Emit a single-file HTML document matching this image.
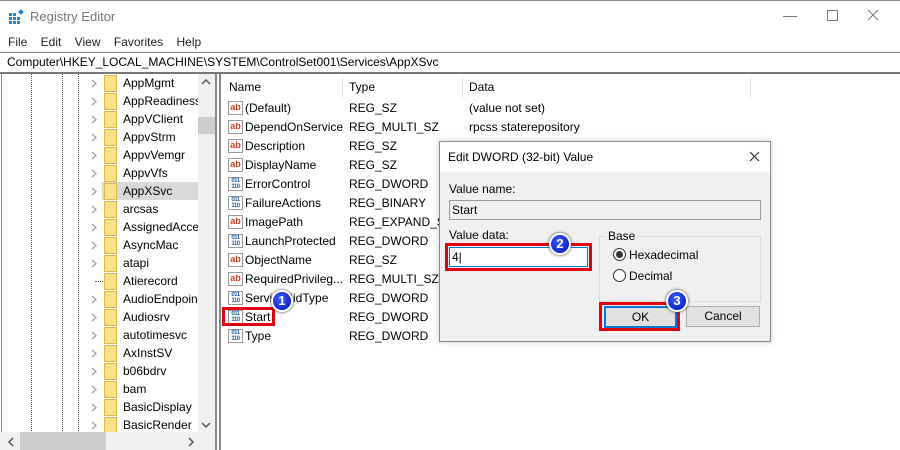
<!DOCTYPE html><html><head><style>
body{margin:0;width:900px;height:450px;overflow:hidden;background:#fff;font-family:"Liberation Sans",sans-serif;font-size:12px;color:#000;position:relative}
.a{position:absolute;white-space:nowrap}
.dot{position:absolute;width:0;border-left:1px dotted #555;top:74px;height:357px}
.fold{position:absolute;left:104px;width:11px;height:15px;background:#fbe08a;border:1px solid #e0b94a}
.chev{position:absolute;left:91px;color:#aaa;font-size:12px}
.ab{position:absolute;left:228px;width:13px;height:12px;border:1px solid #999;background:#fff;color:#d03d1a;font-weight:bold;font-size:9px;line-height:11px;text-align:center}
.bi{position:absolute;left:228px;width:13px;height:12px;border:1px solid #999;background:#fff;color:#2a5ea8;font-weight:bold;font-size:6px;line-height:6px;text-align:center;letter-spacing:-0.5px}
.badge{position:absolute;width:18px;height:18px;border-radius:50%;background:radial-gradient(circle at 40% 35%,#3b5cff,#0010b0);border:2px solid #fff;box-shadow:0 0 3px #333;color:#fff;font-weight:bold;font-size:13px;text-align:center;line-height:18px}
#tree{position:absolute;left:0;top:0;width:198px;height:432px;overflow:hidden}
</style></head><body>
<div class="a" style="left:0;top:0;width:900px;height:1px;background:#888"></div>
<svg class="a" style="left:9px;top:9px" width="16" height="16"><g fill="#1e88d8"><rect x="0" y="4" width="3" height="3"/><rect x="4" y="4" width="3" height="3"/><rect x="0" y="8" width="3" height="3"/><rect x="4" y="8" width="3" height="3"/><rect x="8" y="8" width="3" height="3"/><rect x="0" y="12" width="3" height="3"/><rect x="4" y="12" width="3" height="3"/><rect x="8" y="12" width="3" height="3"/><rect x="10" y="1" width="4" height="4" transform="rotate(45 12 3)"/></g></svg>
<div class="a" style="left:30px;top:9px;font-size:13px;color:#777">Registry Editor</div>
<div class="a" style="left:783px;top:16px;width:14px;height:1px;background:#777"></div>
<div class="a" style="left:827px;top:10px;width:9px;height:9px;border:1px solid #777"></div>
<svg class="a" style="left:867px;top:9px" width="12" height="12"><path d="M1 1L11 11M11 1L1 11" stroke="#777" stroke-width="1"/></svg>
<div class="a" style="left:8px;top:35px;font-size:12px;color:#222">File&nbsp;&nbsp;&nbsp; Edit&nbsp;&nbsp;&nbsp; View&nbsp;&nbsp;&nbsp; Favorites&nbsp;&nbsp;&nbsp; Help</div>
<div class="a" style="left:0;top:50px;width:900px;height:1px;background:#eee"></div>
<div class="a" style="left:0;top:52px;width:900px;height:1px;background:#777"></div>
<div class="a" style="left:7px;top:55px;font-size:12px">Computer\HKEY_LOCAL_MACHINE\SYSTEM\ControlSet001\Services\AppXSvc</div>
<div class="a" style="left:0;top:72px;width:900px;height:2px;background:#777"></div>
<div class="a" style="left:1px;top:74px;width:1px;height:376px;background:#888"></div>
<div class="dot" style="left:31px"></div><div class="dot" style="left:62px"></div><div class="dot" style="left:78px"></div>
<div id="tree"></div>
<div class="a" style="left:198px;top:74px;width:17px;height:358px;background:#f0f0f0"></div>
<div class="a" style="left:198px;top:117px;width:17px;height:17px;background:#cdcdcd"></div>
<svg class="a" style="left:201px;top:78px" width="10" height="8"><path d="M1 6L5 2L9 6" stroke="#555" fill="none" stroke-width="1.5"/></svg>
<svg class="a" style="left:201px;top:421px" width="10" height="8"><path d="M1 2L5 6L9 2" stroke="#555" fill="none" stroke-width="1.5"/></svg>
<div class="a" style="left:0;top:432px;width:215px;height:18px;background:#f0f0f0"></div>
<div class="a" style="left:20px;top:432px;width:86px;height:18px;background:#cdcdcd"></div>
<svg class="a" style="left:7px;top:437px" width="8" height="10"><path d="M6 1L2 5L6 9" stroke="#555" fill="none" stroke-width="1.5"/></svg>
<svg class="a" style="left:187px;top:437px" width="8" height="10"><path d="M2 1L6 5L2 9" stroke="#555" fill="none" stroke-width="1.5"/></svg>
<div class="a" style="left:215px;top:74px;width:2px;height:376px;background:#888"></div>
<div class="a" style="left:219px;top:74px;width:2px;height:376px;background:#888"></div>
<div class="a" style="left:342px;top:76px;width:1px;height:22px;background:#e5e5e5"></div>
<div class="a" style="left:462px;top:76px;width:1px;height:22px;background:#e5e5e5"></div>
<div class="a" style="left:750px;top:76px;width:1px;height:22px;background:#e5e5e5"></div>
<div class="a" style="left:229px;top:80px">Name</div><div class="a" style="left:349px;top:80px">Type</div><div class="a" style="left:469px;top:80px">Data</div>
<div id="list"></div>
<div class="a" style="left:222px;top:307px;width:53px;height:19px;border:3px solid #e5000f;box-sizing:border-box"></div>
<div class="badge" style="left:271px;top:290px">1</div>
<div class="a" style="left:439px;top:141px;width:330px;height:199px;border:1px solid #888;background:#f0f0f0;box-shadow:0 0 6px rgba(0,0,0,.2)"></div>
<div class="a" style="left:440px;top:142px;width:330px;height:30px;background:#fff"></div>
<div class="a" style="left:448px;top:150px;font-size:12px">Edit DWORD (32-bit) Value</div>
<svg class="a" style="left:749px;top:151px" width="11" height="11"><path d="M1 1L10 10M10 1L1 10" stroke="#333" stroke-width="1.2"/></svg>
<div class="a" style="left:449px;top:182px">Value name:</div>
<div class="a" style="left:449px;top:200px;width:310px;height:18px;border:1px solid #999;background:#f0f0f0"></div>
<div class="a" style="left:452px;top:203px">Start</div>
<div class="a" style="left:449px;top:228px">Value data:</div>
<div class="a" style="left:445px;top:243px;width:147px;height:28px;border:3px solid #e5000f;box-sizing:border-box"></div>
<div class="a" style="left:449px;top:247px;width:137px;height:18px;border:1px solid #0078d7;background:#fff"></div>
<div class="a" style="left:452px;top:250px">4|</div>
<div class="badge" style="left:549px;top:233px">2</div>
<div class="a" style="left:599px;top:236px;width:160px;height:64px;border:1px solid #ddd"></div>
<div class="a" style="left:606px;top:229px;background:#f0f0f0;padding:0 2px">Base</div>
<div class="a" style="left:613px;top:248px;width:11px;height:11px;border:1px solid #333;border-radius:50%;background:#fff"></div>
<div class="a" style="left:616px;top:251px;width:7px;height:7px;border-radius:50%;background:#333"></div>
<div class="a" style="left:629px;top:248px">Hexadecimal</div>
<div class="a" style="left:613px;top:269px;width:11px;height:11px;border:1px solid #333;border-radius:50%;background:#fff"></div>
<div class="a" style="left:629px;top:269px">Decimal</div>
<div class="a" style="left:599px;top:302px;width:81px;height:29px;border:3px solid #e5000f;box-sizing:border-box"></div>
<div class="a" style="left:604px;top:306px;width:69px;height:18px;border:2px solid #0078d7;background:#e1e1e1;text-align:center;line-height:18px">OK</div>
<div class="a" style="left:686px;top:306px;width:72px;height:19px;border:1px solid #adadad;background:#e1e1e1;text-align:center;line-height:19px">Cancel</div>
<div class="badge" style="left:666px;top:290px">3</div>
<script>
var t=["AppMgmt","AppReadiness","AppVClient","AppvStrm","AppvVemgr","AppvVfs","AppXSvc","arcsas","AssignedAcce","AsyncMac","atapi","Atierecord","AudioEndpoin","Audiosrv","autotimesvc","AxInstSV","b06bdrv","bam","BasicDisplay","BasicRender"];
var h="";t.forEach(function(n,i){var y=74+i*18;
if(i==6)h+='<div class="a" style="left:102px;top:'+y+'px;width:96px;height:18px;background:#d9d9d9"></div>';
if(n!="Atierecord")h+='<svg class="a" style="left:91px;top:'+(y+5)+'px" width="7" height="9"><path d="M1 1L5 4.5L1 8" stroke="#a0a0a0" fill="none" stroke-width="1.3"/></svg>';
else h+='<div class="a" style="left:95px;top:'+(y+9)+'px;width:8px;border-top:1px dotted #555"></div>';
h+='<div class="fold" style="top:'+(y+1)+'px"></div><div class="a" style="left:123px;top:'+(y+2)+'px">'+n+'</div>';});
document.getElementById('tree').innerHTML=h;
var L=[["(Default)","REG_SZ","(value not set)",0],["DependOnService","REG_MULTI_SZ","rpcss staterepository",0],["Description","REG_SZ","",0],["DisplayName","REG_SZ","",0],["ErrorControl","REG_DWORD","",1],["FailureActions","REG_BINARY","",1],["ImagePath","REG_EXPAND_SZ","",0],["LaunchProtected","REG_DWORD","",1],["ObjectName","REG_SZ","",0],["RequiredPrivileg...","REG_MULTI_SZ","",0],["ServiceSidType","REG_DWORD","",1],["Start","REG_DWORD","",1],["Type","REG_DWORD","",1]];
h="";L.forEach(function(r,i){var y=100+i*19;
h+=(r[3]?'<div class="bi" style="top:'+(y+1)+'px">011<br>110</div>':'<div class="ab" style="top:'+(y+1)+'px">ab</div>');
h+='<div class="a" style="left:245px;top:'+(y+1)+'px">'+r[0]+'</div><div class="a" style="left:349px;top:'+(y+1)+'px">'+r[1]+'</div><div class="a" style="left:469px;top:'+(y+1)+'px">'+r[2]+'</div>';});
document.getElementById('list').innerHTML=h;
</script>
</body></html>
